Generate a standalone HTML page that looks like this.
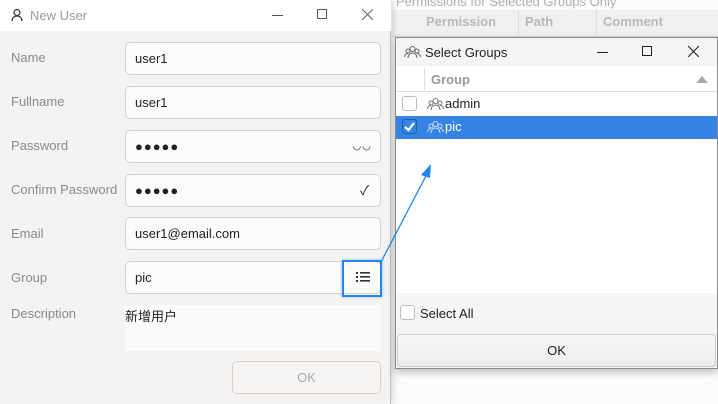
<!DOCTYPE html>
<html><head><meta charset="utf-8"><style>
*{box-sizing:border-box;margin:0;padding:0}
body{width:718px;height:404px;overflow:hidden;background:#f6f5f4;font-family:"Liberation Sans","Noto Sans CJK SC",sans-serif;font-size:13px;position:relative;color:#222}
.abs{position:absolute}
.lbl{position:absolute;left:11px;color:#8a8a8a;font-size:13px}
.inp{position:absolute;left:125px;width:256px;height:33px;border:1px solid #d6d1cd;border-radius:5px;background:#fbfbfb;padding-left:9px;line-height:31px;font-size:13px;color:#222}
</style></head><body>
<div class="abs" style="left:390px;top:0;width:328px;height:404px;background:#fbfbfb"></div>
<div class="abs" style="left:396px;top:-6px;color:#b0b0b0;font-size:13px">Permissions for Selected Groups Only</div>
<div class="abs" style="left:392px;top:10px;width:326px;height:27px;background:#f1f0ef;border-bottom:1px solid #ddd"></div>
<div class="abs" style="left:426px;top:14px;color:#b8b8b8;font-weight:bold;font-size:13px">Permission</div>
<div class="abs" style="left:518px;top:10px;width:1px;height:27px;background:#ddd"></div>
<div class="abs" style="left:525px;top:14px;color:#b8b8b8;font-weight:bold">Path</div>
<div class="abs" style="left:596px;top:10px;width:1px;height:27px;background:#ddd"></div>
<div class="abs" style="left:603px;top:14px;color:#b8b8b8;font-weight:bold">Comment</div>

<div class="abs" style="left:0;top:0;width:391px;height:404px;background:#f4f3f2;border-right:1px solid #bdbdbd;box-shadow:2px 0 6px rgba(0,0,0,.15)"></div>
<div class="abs" style="left:0;top:0;width:391px;height:31px;background:#fff"></div>
<svg class="abs" style="left:10px;top:8px" width="14" height="14" viewBox="0 0 14 14" fill="none" stroke="#333" stroke-width="1.2"><circle cx="7" cy="4.5" r="3"/><path d="M2 13c0-3 2.2-5 5-5s5 2 5 5"/></svg>
<div class="abs" style="left:30px;top:8px;color:#999;font-size:13px">New User</div>
<div class="abs" style="left:272px;top:15px;width:11px;height:1px;background:#555"></div>
<div class="abs" style="left:317px;top:9px;width:10px;height:10px;border:1px solid #555"></div>
<svg class="abs" style="left:362px;top:9px" width="11" height="11" stroke="#666" stroke-width="1.1"><path d="M0 0L11 11M11 0L0 11"/></svg>

<div class="lbl" style="top:50px">Name</div><div class="inp" style="top:42px">user1</div>
<div class="lbl" style="top:94px">Fullname</div><div class="inp" style="top:86px">user1</div>
<div class="lbl" style="top:138px">Password</div><div class="inp" style="top:130px;letter-spacing:1px">●●●●●<span style="position:absolute;right:8px;top:0;font-size:10px">◡◡</span></div>
<div class="lbl" style="top:182px">Confirm Password</div><div class="inp" style="top:174px;letter-spacing:1px">●●●●●<span style="position:absolute;right:10px;top:0">✓</span></div>
<div class="lbl" style="top:226px">Email</div><div class="inp" style="top:217px">user1@email.com</div>
<div class="lbl" style="top:270px">Group</div><div class="inp" style="top:261px">pic</div>
<div class="abs" style="left:342px;top:260px;width:40px;height:37px;border:2px solid #1e88f0;box-shadow:0 0 3px rgba(30,136,240,.5)"></div>
<svg class="abs" style="left:356px;top:271px" width="14" height="12" fill="#333"><rect x="0" y="1" width="2" height="2"/><rect x="4" y="1" width="10" height="1.6"/><rect x="0" y="5" width="2" height="2"/><rect x="4" y="5" width="10" height="1.6"/><rect x="0" y="9" width="2" height="2"/><rect x="4" y="9" width="10" height="1.6"/></svg>
<div class="lbl" style="top:306px">Description</div>
<div class="abs" style="left:125px;top:305px;width:256px;height:46px;background:#fafafa;font-size:13px;padding-top:1px">新增用户</div>
<div class="abs" style="left:232px;top:361px;width:149px;height:33px;border:1px solid #d6d1cd;border-radius:5px;background:#f6f5f4;text-align:center;line-height:31px;color:#aaa">OK</div>

<div class="abs" style="left:395px;top:37px;width:323px;height:332px;background:#f6f5f4;border:1px solid #8a8a8a;box-shadow:0 3px 8px rgba(0,0,0,.25)"></div>
<svg class="abs" style="left:404px;top:45px" width="17" height="14" fill="none" stroke="#666" stroke-width="1"><circle cx="8.5" cy="4" r="2.5"/><circle cx="4" cy="6" r="2"/><circle cx="13" cy="6" r="2"/><path d="M4 13c0-3 2-5 4.5-5s4.5 2 4.5 5M0.5 12c0-2 1.5-3.5 3.5-3.5M16.5 12c0-2-1.5-3.5-3.5-3.5"/></svg>
<div class="abs" style="left:425px;top:45px;font-size:13px">Select Groups</div>
<div class="abs" style="left:597px;top:52px;width:11px;height:1px;background:#222"></div>
<div class="abs" style="left:642px;top:46px;width:10px;height:10px;border:1px solid #222"></div>
<svg class="abs" style="left:688px;top:46px" width="11" height="11" stroke="#222" stroke-width="1.1"><path d="M0 0L11 11M11 0L0 11"/></svg>
<div class="abs" style="left:396px;top:66px;width:321px;height:227px;background:#fff"></div>
<div class="abs" style="left:396px;top:66px;width:321px;height:26px;background:#fff;border-bottom:1px solid #ddd"></div>
<div class="abs" style="left:424px;top:68px;width:1px;height:22px;background:#ddd"></div>
<div class="abs" style="left:431px;top:72px;color:#999;font-weight:bold;font-size:13px">Group</div>
<svg class="abs" style="left:696px;top:76px" width="12" height="7"><path d="M0 7L6 0L12 7Z" fill="#aaa"/></svg>
<div class="abs" style="left:402px;top:96px;width:15px;height:15px;border:1px solid #bbb;border-radius:3px;background:#fff"></div>
<svg class="abs" style="left:427px;top:97px" width="17" height="14" fill="none" stroke="#777" stroke-width="1"><circle cx="8.5" cy="4" r="2.5"/><circle cx="4" cy="6" r="2"/><circle cx="13" cy="6" r="2"/><path d="M4 13c0-3 2-5 4.5-5s4.5 2 4.5 5M0.5 12c0-2 1.5-3.5 3.5-3.5M16.5 12c0-2-1.5-3.5-3.5-3.5"/></svg>
<div class="abs" style="left:445px;top:96px;font-size:13px">admin</div>
<div class="abs" style="left:396px;top:116px;width:321px;height:23px;background:#3584e4"></div>
<div class="abs" style="left:402px;top:119px;width:15px;height:15px;border:1px solid #1c5fb0;border-radius:3px;background:#3584e4"></div>
<svg class="abs" style="left:404px;top:121px" width="11" height="11"><path d="M1 6L4.5 9L10 2" stroke="#fff" stroke-width="2.2" fill="none"/></svg>
<svg class="abs" style="left:427px;top:120px" width="17" height="14" fill="none" stroke="#c8dcf5" stroke-width="1"><circle cx="8.5" cy="4" r="2.5"/><circle cx="4" cy="6" r="2"/><circle cx="13" cy="6" r="2"/><path d="M4 13c0-3 2-5 4.5-5s4.5 2 4.5 5M0.5 12c0-2 1.5-3.5 3.5-3.5M16.5 12c0-2-1.5-3.5-3.5-3.5"/></svg>
<div class="abs" style="left:445px;top:119px;font-size:13px;color:#fff">pic</div>
<div class="abs" style="left:400px;top:305px;width:15px;height:15px;border:1px solid #bbb;border-radius:3px;background:#fff"></div>
<div class="abs" style="left:420px;top:306px;font-size:13px">Select All</div>
<div class="abs" style="left:397px;top:334px;width:319px;height:33px;border:1px solid #ccc;border-radius:4px;background:linear-gradient(#f8f7f6,#eeedec);text-align:center;line-height:31px">OK</div>

<svg class="abs" style="left:370px;top:150px" width="70" height="120"><path d="M11 112L58 22" stroke="#1e88f0" stroke-width="1.3"/><path d="M61 14L51 25L60 28Z" fill="#1e88f0"/></svg>
</body></html>
